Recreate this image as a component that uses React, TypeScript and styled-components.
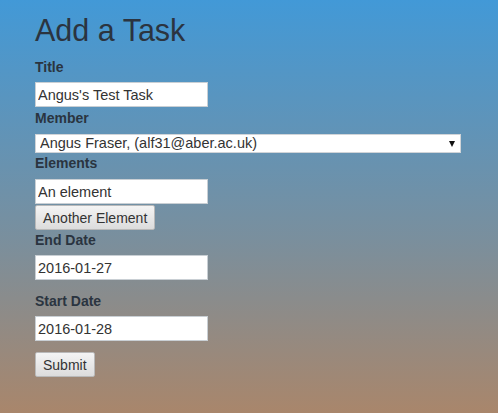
import React from "react";
import styled, { createGlobalStyle } from "styled-components";

const Global = createGlobalStyle`
  html, body { margin: 0; padding: 0; }
  body {
    min-height: 413px;
    background: linear-gradient(to bottom, #4299d7 0%, #7a8f9d 58%, #a9866b 100%);
    font-family: "Liberation Sans", Arial, sans-serif;
    color: #333;
  }
`;

const Page = styled.div`
  padding: 14px 0 0 35px;
  min-height: 413px;
  box-sizing: border-box;
`;

const Heading = styled.h1`
  margin: 0 0 10px;
  font-size: 30.5px;
  line-height: 33px;
  font-weight: 400;
  color: #2b3440;
`;

const Form = styled.form`
  display: flex;
  flex-direction: column;
  align-items: flex-start;
`;

const Label = styled.label<{ $gap?: number; $top?: number }>`
  display: block;
  font-size: 14px;
  line-height: 20px;
  font-weight: 700;
  color: #2a3440;
  margin-top: ${(p) => p.$top ?? 0}px;
  margin-bottom: ${(p) => p.$gap ?? 5}px;
`;

const TextInput = styled.input`
  box-sizing: border-box;
  width: 173px;
  height: 25px;
  margin: 0;
  padding: 0 2px;
  border: 1px solid #c9cfd4;
  background: #fff;
  font-family: "Liberation Sans", Arial, sans-serif;
  font-size: 14.5px;
  color: #333;
  outline: none;
`;

const SelectWrap = styled.div`
  position: relative;
  width: 426px;
  &::after {
    content: "";
    position: absolute;
    right: 6px;
    top: 7px;
    border-left: 3.5px solid transparent;
    border-right: 3.5px solid transparent;
    border-top: 6px solid #111;
    pointer-events: none;
  }
`;

const Select = styled.select`
  appearance: none;
  -webkit-appearance: none;
  box-sizing: border-box;
  display: block;
  width: 426px;
  height: 19px;
  margin: 0;
  padding: 0 0 0 4px;
  border: 1px solid #d0d4d8;
  border-radius: 0;
  background: #fff;
  font-family: "Liberation Sans", Arial, sans-serif;
  font-size: 14.5px;
  line-height: 17px;
  color: #333;
  outline: none;
`;

const Button = styled.button`
  box-sizing: border-box;
  display: block;
  height: 25px;
  margin: 0;
  padding: 0 7px;
  border: 1px solid #b9b9b9;
  border-radius: 2px;
  background: linear-gradient(to bottom, #f4f4f4, #dcdcdc);
  font-family: "Liberation Sans", Arial, sans-serif;
  font-size: 14px;
  color: #333;
`;

const Spacer = styled.div<{ $h: number }>`
  height: ${(p) => p.$h}px;
`;

export default function App() {
  return (
    <>
      <Global />
      <Page>
        <Heading>Add a Task</Heading>
        <Form onSubmit={(e) => e.preventDefault()}>
          <Label>Title</Label>
          <TextInput defaultValue="Angus's Test Task" />
          <Label $top={1} $gap={6}>Member</Label>
          <SelectWrap>
            <Select defaultValue="alf31">
              <option value="alf31">Angus Fraser, (alf31@aber.ac.uk)</option>
            </Select>
          </SelectWrap>
          <Label $gap={6}>Elements</Label>
          <TextInput defaultValue="An element" />
          <Spacer $h={1} />
          <Button type="button">Another Element</Button>
          <Label>End Date</Label>
          <TextInput defaultValue="2016-01-27" />
          <Label $top={11}>Start Date</Label>
          <TextInput defaultValue="2016-01-28" />
          <Spacer $h={11} />
          <Button type="submit">Submit</Button>
        </Form>
      </Page>
    </>
  );
}
